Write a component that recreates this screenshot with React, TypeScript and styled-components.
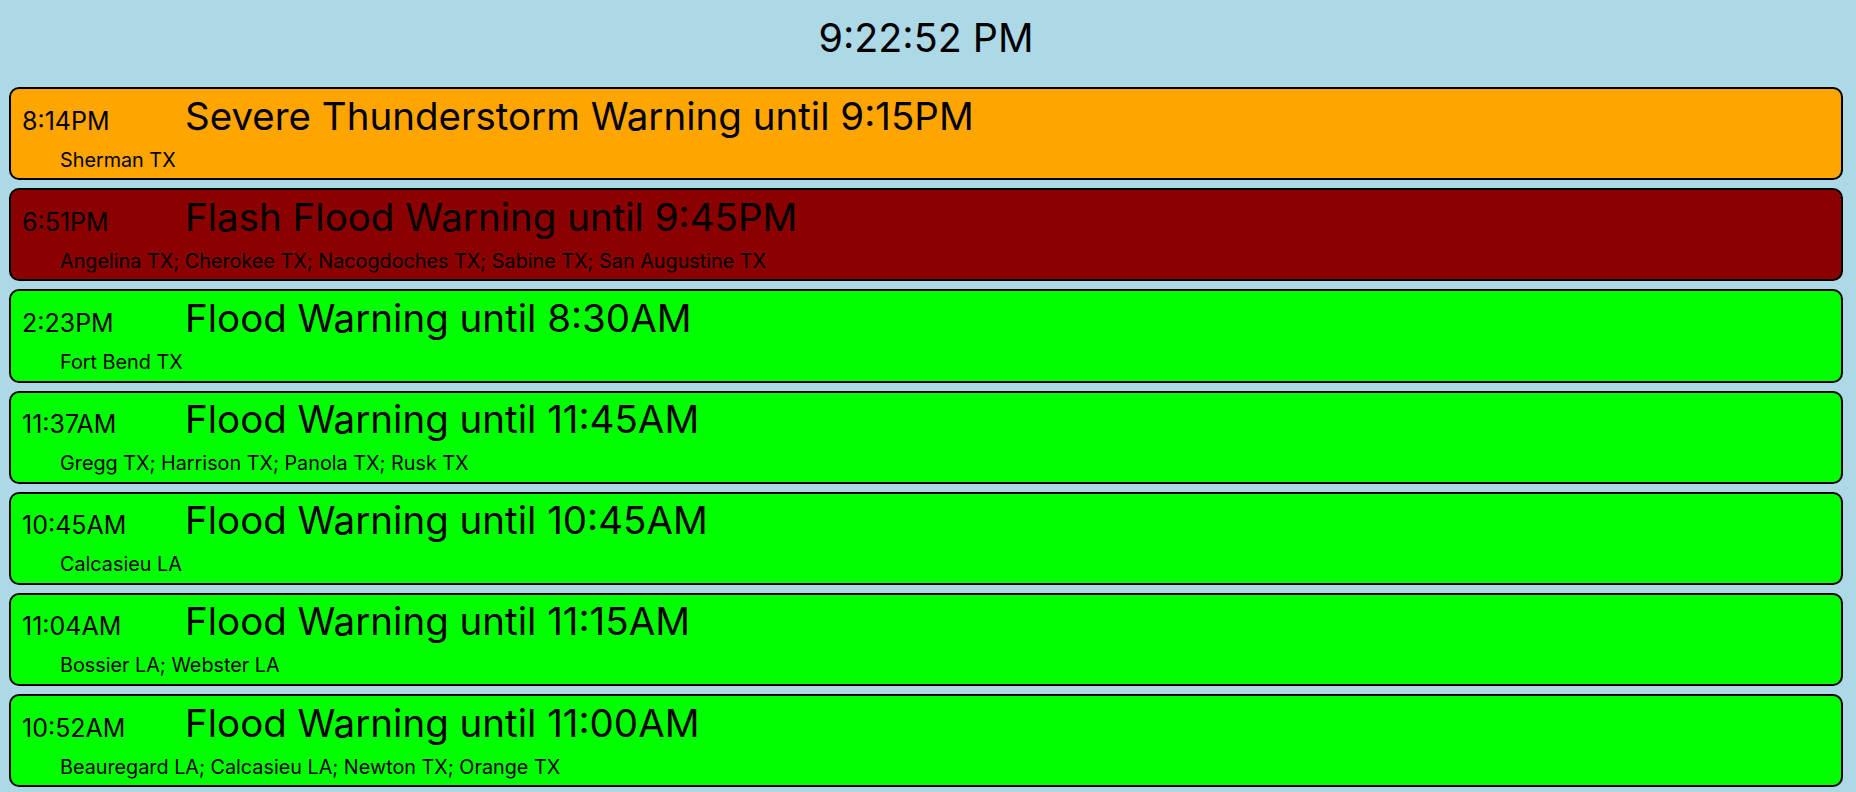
import React from "react";
import styled, { createGlobalStyle } from "styled-components";

const GlobalStyle = createGlobalStyle`
  html, body {
    margin: 0;
    padding: 0;
    background: #add8e6;
    font-family: Inter, "Noto Sans", sans-serif;
    color: #000;
  }
`;

const Page = styled.div`
  padding: 0 13px 0 9px;
`;

const Clock = styled.h1`
  margin: 0;
  padding: 15px 0 25px;
  text-align: center;
  font-size: 39.4px;
  font-weight: 400;
  line-height: 47px;
`;

const List = styled.div`
  display: flex;
  flex-direction: column;
  gap: 8px;
`;

const Card = styled.div<{ $bg: string }>`
  background: ${(p) => p.$bg};
  border: 2px solid #000;
  border-radius: 10px;
  padding: 3.5px 11px 6.7px;
  display: flex;
  flex-direction: column;
  gap: 9px;
`;

const TopRow = styled.div`
  display: flex;
  align-items: baseline;
  height: 46px;
`;

const Time = styled.span`
  width: 163px;
  flex: none;
  font-size: 25px;
  line-height: 1.21;
`;

const Title = styled.span`
  font-size: 38.5px;
  line-height: 46px;
  white-space: nowrap;
`;

const Areas = styled.div`
  padding-left: 38px;
  font-size: 19.8px;
  line-height: 24px;
`;

type Alert = { time: string; title: string; areas: string; color: string };

const alerts: Alert[] = [
  { time: "8:14PM", title: "Severe Thunderstorm Warning until 9:15PM", areas: "Sherman TX", color: "#ffa500" },
  { time: "6:51PM", title: "Flash Flood Warning until 9:45PM", areas: "Angelina TX; Cherokee TX; Nacogdoches TX; Sabine TX; San Augustine TX", color: "#8b0000" },
  { time: "2:23PM", title: "Flood Warning until 8:30AM", areas: "Fort Bend TX", color: "#00ff00" },
  { time: "11:37AM", title: "Flood Warning until 11:45AM", areas: "Gregg TX; Harrison TX; Panola TX; Rusk TX", color: "#00ff00" },
  { time: "10:45AM", title: "Flood Warning until 10:45AM", areas: "Calcasieu LA", color: "#00ff00" },
  { time: "11:04AM", title: "Flood Warning until 11:15AM", areas: "Bossier LA; Webster LA", color: "#00ff00" },
  { time: "10:52AM", title: "Flood Warning until 11:00AM", areas: "Beauregard LA; Calcasieu LA; Newton TX; Orange TX", color: "#00ff00" },
];

export default function App() {
  return (
    <>
      <GlobalStyle />
      <Page>
        <Clock>9:22:52 PM</Clock>
        <List>
          {alerts.map((a, i) => (
            <Card key={i} $bg={a.color}>
              <TopRow>
                <Time>{a.time}</Time>
                <Title>{a.title}</Title>
              </TopRow>
              <Areas>{a.areas}</Areas>
            </Card>
          ))}
        </List>
      </Page>
    </>
  );
}
